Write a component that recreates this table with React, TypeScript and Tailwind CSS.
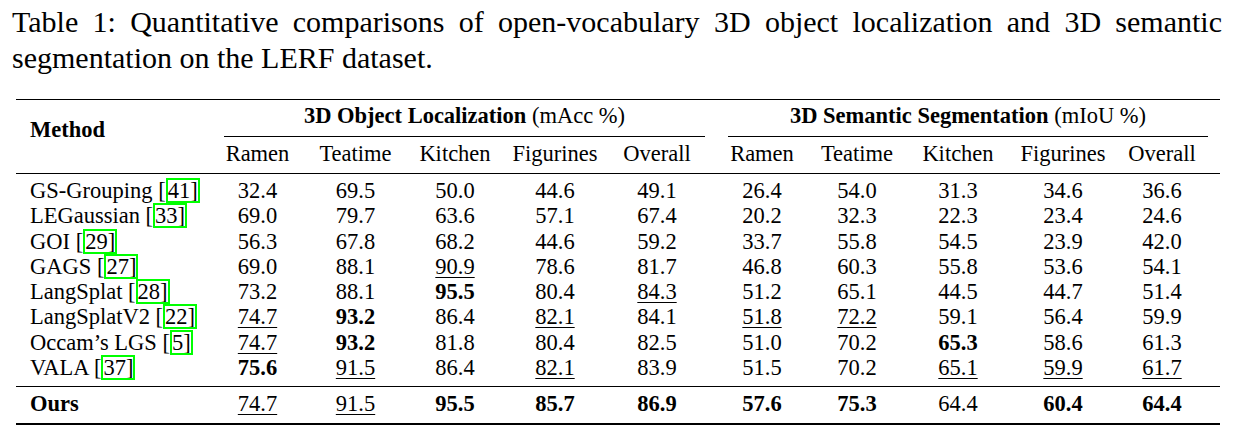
import React from 'react';

type Mark = '' | 'b' | 'u';
type Cell = [string, Mark];

const cols = 'grid grid-cols-[193px_97px_99px_100px_100px_104px_106px_84px_118px_92px_111px]';

const rows: { name: string; cite: string; vals: Cell[] }[] = [
  { name: 'GS-Grouping', cite: '41', vals: [['32.4', ''], ['69.5', ''], ['50.0', ''], ['44.6', ''], ['49.1', ''], ['26.4', ''], ['54.0', ''], ['31.3', ''], ['34.6', ''], ['36.6', '']] },
  { name: 'LEGaussian', cite: '33', vals: [['69.0', ''], ['79.7', ''], ['63.6', ''], ['57.1', ''], ['67.4', ''], ['20.2', ''], ['32.3', ''], ['22.3', ''], ['23.4', ''], ['24.6', '']] },
  { name: 'GOI', cite: '29', vals: [['56.3', ''], ['67.8', ''], ['68.2', ''], ['44.6', ''], ['59.2', ''], ['33.7', ''], ['55.8', ''], ['54.5', ''], ['23.9', ''], ['42.0', '']] },
  { name: 'GAGS', cite: '27', vals: [['69.0', ''], ['88.1', ''], ['90.9', 'u'], ['78.6', ''], ['81.7', ''], ['46.8', ''], ['60.3', ''], ['55.8', ''], ['53.6', ''], ['54.1', '']] },
  { name: 'LangSplat', cite: '28', vals: [['73.2', ''], ['88.1', ''], ['95.5', 'b'], ['80.4', ''], ['84.3', 'u'], ['51.2', ''], ['65.1', ''], ['44.5', ''], ['44.7', ''], ['51.4', '']] },
  { name: 'LangSplatV2', cite: '22', vals: [['74.7', 'u'], ['93.2', 'b'], ['86.4', ''], ['82.1', 'u'], ['84.1', ''], ['51.8', 'u'], ['72.2', 'u'], ['59.1', ''], ['56.4', ''], ['59.9', '']] },
  { name: 'Occam\u2019s LGS', cite: '5', vals: [['74.7', 'u'], ['93.2', 'b'], ['81.8', ''], ['80.4', ''], ['82.5', ''], ['51.0', ''], ['70.2', ''], ['65.3', 'b'], ['58.6', ''], ['61.3', '']] },
  { name: 'VALA', cite: '37', vals: [['75.6', 'b'], ['91.5', 'u'], ['86.4', ''], ['82.1', 'u'], ['83.9', ''], ['51.5', ''], ['70.2', ''], ['65.1', 'u'], ['59.9', 'u'], ['61.7', 'u']] },
];

const ours: Cell[] = [['74.7', 'u'], ['91.5', 'u'], ['95.5', 'b'], ['85.7', 'b'], ['86.9', 'b'], ['57.6', 'b'], ['75.3', 'b'], ['64.4', ''], ['60.4', 'b'], ['64.4', 'b']];

const scenes = ['Ramen', 'Teatime', 'Kitchen', 'Figurines', 'Overall'];

function Value({ cell, last }: { cell: Cell; last: boolean }) {
  const [v, m] = cell;
  return (
    <div className={`text-center ${last ? 'pr-[5px]' : ''}`}>
      <span className={m === 'b' ? 'font-bold' : m === 'u' ? 'underline decoration-1 underline-offset-[3px]' : ''}>{v}</span>
    </div>
  );
}

export default function App() {
  return (
    <div className="w-[1240px] h-[440px] bg-white text-black font-['Liberation_Serif',serif]">
      {/* caption */}
      <div className="pl-[12px] pt-[4px] w-[1222px] text-[30px] leading-[36px]">
        <div className="text-justify [text-align-last:justify]">
          Table 1: Quantitative comparisons of open-vocabulary 3D object localization and 3D semantic
        </div>
        <div>segmentation on the LERF dataset.</div>
      </div>

      {/* table */}
      <div className="ml-[16px] mt-[23px] w-[1204px] text-[22.5px] leading-[25px] border-t border-b-2 border-black">
        <div className={`${cols} border-b border-black`}>
          <div className="row-span-2 pl-[14px] pt-[17px] font-bold">Method</div>
          <div className="col-span-5 ml-[15px] mr-[4px] pt-[3px] pb-[8px] text-center border-b border-black">
            <span className="font-bold">3D Object Localization</span> (mAcc %)
          </div>
          <div className="col-span-5 ml-[19px] mr-[12px] pt-[3px] pb-[8px] text-center border-b border-black">
            <span className="font-bold">3D Semantic Segmentation</span> (mIoU %)
          </div>
          {[...scenes, ...scenes].map((s, i) => (
            <div key={i} className={`pt-[4px] pb-[7px] text-center ${i === 9 ? 'pr-[5px]' : ''}`}>{s}</div>
          ))}
        </div>

        <div className="pt-[4px] pb-[6px] border-b border-black leading-[25.3px]">
          {rows.map((r) => (
            <div key={r.name} className={cols}>
              <div className="pl-[14px] whitespace-nowrap">
                {r.name} [<span className="px-[2px] outline-2 outline-[#00ff00] -outline-offset-2">{r.cite}]</span>
              </div>
              {r.vals.map((c, i) => (
                <Value key={i} cell={c} last={i === 9} />
              ))}
            </div>
          ))}
        </div>

        <div className={`${cols} pt-[4px] pb-[6px] leading-[25.3px]`}>
          <div className="pl-[14px] font-bold">Ours</div>
          {ours.map((c, i) => (
            <Value key={i} cell={c} last={i === 9} />
          ))}
        </div>
      </div>
    </div>
  );
}
